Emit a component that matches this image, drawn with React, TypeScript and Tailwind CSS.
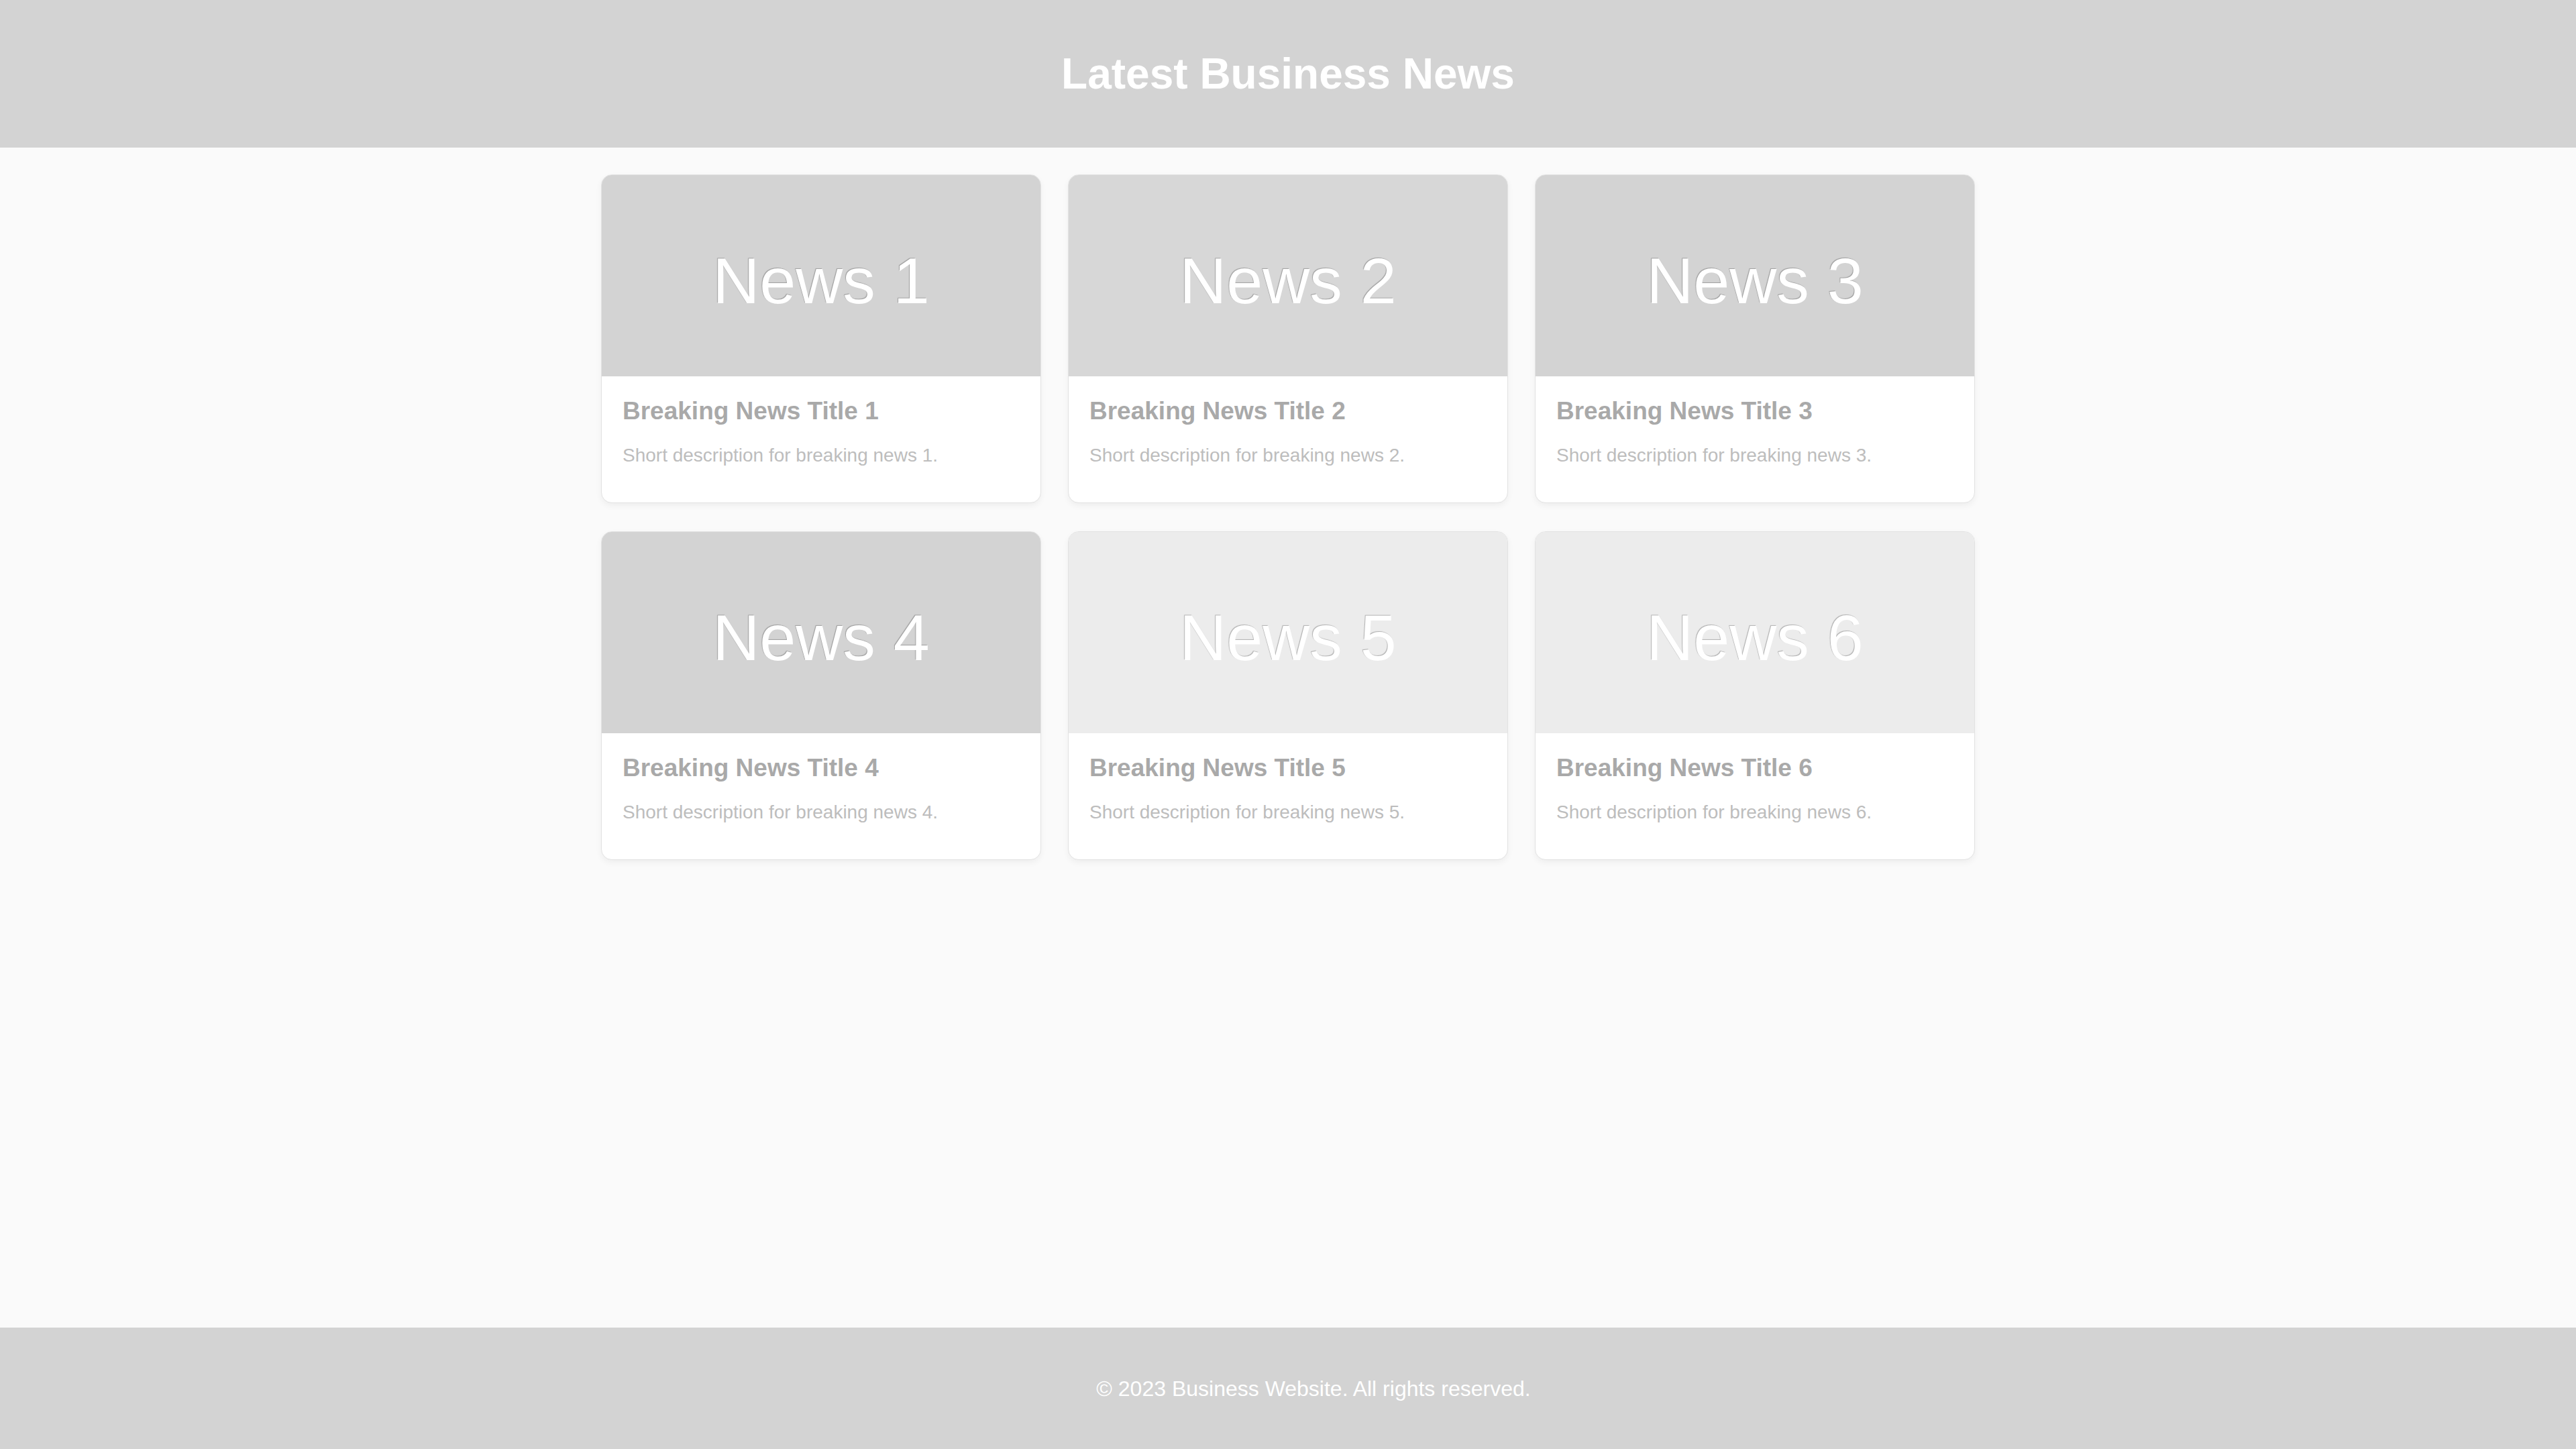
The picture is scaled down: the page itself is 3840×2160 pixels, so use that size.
import React from "react";

const news = [
  { id: 1, bg: "bg-[#d3d3d3]" },
  { id: 2, bg: "bg-[#d7d7d7]" },
  { id: 3, bg: "bg-[#d3d3d3]" },
  { id: 4, bg: "bg-[#d3d3d3]" },
  { id: 5, bg: "bg-[#ececec]" },
  { id: 6, bg: "bg-[#ececec]" },
];

export default function App() {
  return (
    <div className="flex min-h-screen flex-col bg-[#fafafa] font-['Liberation_Sans',Arial,sans-serif]">
      <header className="flex h-[220px] shrink-0 items-center justify-center bg-[#d3d3d3]">
        <h1 className="text-[64px] font-bold leading-none text-white">Latest Business News</h1>
      </header>
      <main className="flex-1 pt-[40px]">
        <div className="mx-auto grid w-[2048px] grid-cols-3 gap-x-[40px] gap-y-[42px]">
          {news.map((n) => (
            <div
              key={n.id}
              className="flex h-[490px] flex-col overflow-hidden rounded-[16px] border border-[#e2e2e2] bg-white shadow-[0_4px_10px_rgba(0,0,0,0.05)]"
            >
              <div className={`flex h-[300px] shrink-0 items-center justify-center pt-[14px] ${n.bg}`}>
                <span className="text-[97px] leading-none text-white [text-shadow:-1px_-1px_1px_rgba(0,0,0,0.25)]">
                  News {n.id}
                </span>
              </div>
              <div className="px-[31px] pt-[30px]">
                <h3 className="text-[37px] font-bold leading-[43px] text-[#a9a9a9]">
                  Breaking News Title {n.id}
                </h3>
                <p className="mt-[29px] text-[28px] leading-[32px] text-[#bdbdbd]">
                  Short description for breaking news {n.id}.
                </p>
              </div>
            </div>
          ))}
        </div>
      </main>
      <footer className="flex h-[181px] shrink-0 items-center justify-center bg-[#d3d3d3] pl-[76px]">
        <p className="text-[32px] leading-none text-white">© 2023 Business Website. All rights reserved.</p>
      </footer>
    </div>
  );
}
